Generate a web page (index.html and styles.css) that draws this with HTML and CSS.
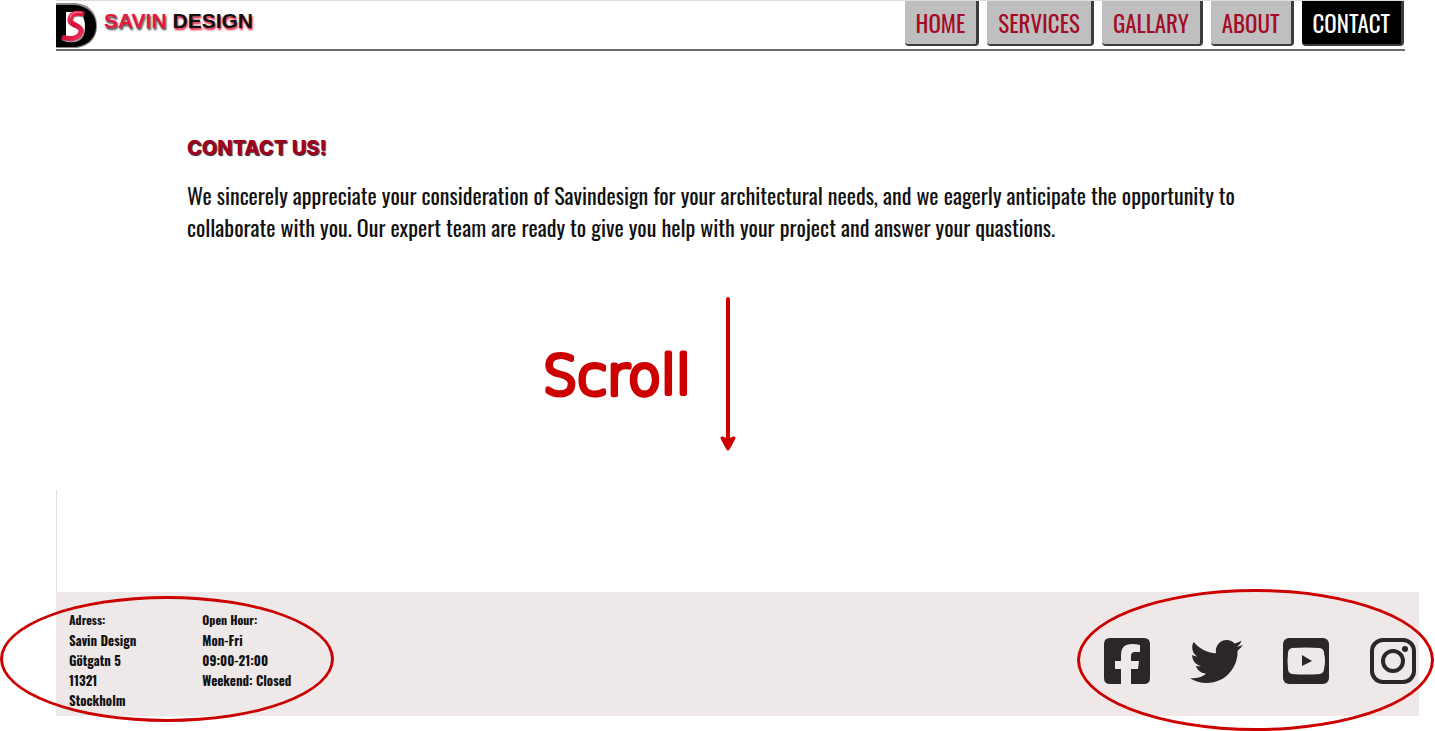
FILE: index.html
```html
<!DOCTYPE html>
<html lang="en">
<head>
<meta charset="utf-8">
<title>Savin Design - Contact</title>
<link rel="stylesheet" href="styles.css">
</head>
<body>
<div class="page">
  <header class="header">
    <a class="brand" href="#">
      <svg class="logo" viewBox="0 0 42 48" aria-hidden="true">
        <defs>
          <linearGradient id="shine" x1="0" y1="0" x2="1" y2="1">
            <stop offset="0" stop-color="#ff4a6c"/>
            <stop offset="0.5" stop-color="#d80b38"/>
            <stop offset="1" stop-color="#f53a60"/>
          </linearGradient>
        </defs>
        <path d="M0 2H17C32 2 41 11 41 25C41 39 31 47 17 47H0Z" fill="#888"/>
        <path d="M0 4H16C30 4 40 12 40 25C40 38 30 46 16 46H0Z" fill="#000"/>
        <path d="M10 11H20C26 12 29 18 29 25C29 33 26 39 19 41H10Z" fill="#fff"/>
        <path d="M28 14C19 12 16 14 15 19C14 26 26 24 26 31C25 40 13 40 7 37" fill="none" stroke="#999" stroke-width="5"/>
        <path d="M28 13C19 11 15 13 14 18C13 25 25 23 25 30C24 38 13 39 6 36" fill="none" stroke="url(#shine)" stroke-width="5"/>
        <path d="M26 12C19 10 15 12 14 17" fill="none" stroke="#ff8ba0" stroke-width="1"/>
      </svg>
      <span class="brand-name"><span class="brand-red">SAVIN</span> <span class="brand-dark">DESIGN</span></span>
    </a>
    <nav class="nav">
      <a class="tab" href="#">HOME</a>
      <a class="tab" href="#">SERVICES</a>
      <a class="tab" href="#">GALLARY</a>
      <a class="tab" href="#">ABOUT</a>
      <a class="tab active" href="#">CONTACT</a>
    </nav>
  </header>

  <main class="main">
    <section class="intro">
      <h1 class="title">CONTACT US!</h1>
      <p class="lead">We sincerely appreciate your consideration of Savindesign for your architectural needs, and we eagerly anticipate the opportunity to<br>collaborate with you. Our expert team are ready to give you help with your project and answer your quastions.</p>
    </section>
    <div class="scroll">
      <svg class="scroll-label" viewBox="0 0 150 64"><text x="0" y="52">Scroll</text></svg>
      <svg class="arrow" viewBox="0 0 18 156" aria-hidden="true">
        <path d="M9 3V144" stroke="#c00" stroke-width="4" stroke-linecap="round"/>
        <path d="M3 142L9 144L15 142Q12 148 9 153Q6 148 3 142Z" fill="#c00" stroke="#c00" stroke-width="3" stroke-linejoin="round"/>
      </svg>
    </div>
    <div class="spacer"></div>
  </main>

  <footer class="footer">
    <div class="details">
      <address class="block"><span class="small">Adress:</span><br>Savin Design<br>Götgatn 5<br>11321<br>Stockholm</address>
      <p class="block"><span class="small">Open Hour:</span><br>Mon-Fri<br>09:00-21:00<br>Weekend: Closed</p>
      <span class="ring ring-left"></span>
    </div>
    <div class="social">
      <a class="icon" href="#" aria-label="Facebook"><svg viewBox="0 0 48 48"><path fill="#2b2627" d="M7 1H41Q47 1 47 7V41Q47 47 41 47H28V32H35L36 24H28V19Q28 15 32 15H37V8Q33 7 29 7Q18 7 18 18V24H12V32H18V47H7Q1 47 1 41V7Q1 1 7 1Z"/></svg></a>
      <a class="icon wide" href="#" aria-label="Twitter"><svg viewBox="0 0 512 512"><path fill="#2b2627" d="M459.37 151.716c.325 4.548.325 9.097.325 13.645 0 138.72-105.583 298.558-298.558 298.558-59.452 0-114.68-17.219-161.137-47.106 8.447.974 16.568 1.299 25.34 1.299 49.055 0 94.213-16.568 130.274-44.832-46.132-.975-84.792-31.188-98.112-72.772 6.498.974 12.995 1.624 19.818 1.624 9.421 0 18.843-1.3 27.614-3.573-48.081-9.747-84.143-51.98-84.143-102.985v-1.299c13.969 7.797 30.214 12.67 47.431 13.319-28.264-18.843-46.781-51.005-46.781-87.391 0-19.492 5.197-37.36 14.294-52.954 51.655 63.675 129.3 105.258 216.365 109.807-1.624-7.797-2.599-15.918-2.599-24.04 0-57.828 46.782-104.934 104.934-104.934 30.213 0 57.502 12.67 76.67 33.137 23.715-4.548 46.456-13.32 66.599-25.34-7.798 24.366-24.366 44.833-46.132 57.827 21.117-2.273 41.584-8.122 60.426-16.243-14.292 20.791-32.161 39.308-52.628 54.253z"/></svg></a>
      <a class="icon" href="#" aria-label="YouTube"><svg viewBox="0 0 48 48"><rect x="1" y="1" width="46" height="46" rx="6" fill="#2b2627"/><path d="M10 11Q24 10 38 11Q42 12 42 16Q44 24 42 32Q42 36 38 37Q24 38 10 37Q6 36 6 32Q5 24 6 16Q6 12 10 11Z" fill="#eee8e8"/><path d="M20 18L30 24L20 29Z" fill="#2b2627"/></svg></a>
      <a class="icon" href="#" aria-label="Instagram"><svg viewBox="0 0 48 48"><rect x="3" y="3" width="42" height="42" rx="11" fill="none" stroke="#2b2627" stroke-width="4"/><circle cx="24" cy="24" r="10" fill="none" stroke="#2b2627" stroke-width="4"/><circle cx="36" cy="12" r="3" fill="#2b2627"/></svg></a>
      <span class="ring ring-right"></span>
    </div>
  </footer>
</div>
</body>
</html>
```
FILE: styles.css
```css
* { box-sizing: border-box; }
body {
  margin: 0;
  background: #fff;
  color: #111;
  font-family: Oswald, "Roboto Condensed", "Liberation Sans Narrow", "Liberation Sans", sans-serif;
}
a { color: inherit; text-decoration: none; }
.page { padding: 0 16px 15px 56px; }
.header {
  display: flex;
  justify-content: space-between;
  align-items: flex-start;
  height: 51px;
  margin-right: 14px;
  border-top: 1px solid #ddd;
  border-bottom: 2px solid #6b6b6b;
}
.brand { display: flex; gap: 6px; }
.logo { width: 42px; height: 48px; }
.brand-name {
  padding-top: 8px;
  font: bold 21px/24px "Liberation Sans", sans-serif;
}
.brand-red { color: #e8173d; text-shadow: 1px 2px 2px #444; }
.brand-dark { color: #111; text-shadow: 1px 2px 2px #e8173d; }
.nav { display: flex; gap: 8px; padding-right: 1px; }
.tab {
  padding: 1px 11px 0;
  border: solid #3c3c3c;
  border-width: 0 3px 2px 0;
  border-radius: 0 0 4px 4px;
  background: #bfbfbf;
  color: #a30b27;
  font-size: 23px;
  line-height: 42px;
}
.tab.active { background: #000; color: #fff; }
.intro { padding: 85px 120px 0 131px; }
.title {
  margin: 0;
  color: #a00320;
  font: 800 20px/24px Inter, sans-serif;
  text-shadow: 1px 1px 1px #223;
}
.lead {
  margin: 19px 0 0;
  font-size: 22px;
  line-height: 32px;
}
.scroll {
  display: flex;
  justify-content: center;
  align-items: center;
  gap: 26px;
  padding-top: 53px;
  padding-right: 196px;
}
.scroll-label {
  width: 150px;
  height: 64px;
  overflow: visible;
  fill: #c00;
  stroke: #c00;
  stroke-width: 5px;
  stroke-linejoin: round;
  font: 200 54px "DejaVu Sans", sans-serif;
}
.arrow { width: 18px; height: 156px; }
.spacer {
  height: 102px;
  margin-top: 38px;
  border-left: 1px solid #ddd;
}
.footer {
  display: flex;
  justify-content: space-between;
  align-items: center;
  height: 124px;
  padding: 0 2px 0 13px;
  background: #eee8e8;
}
.details {
  position: relative;
  display: flex;
  gap: 66px;
  padding-top: 11px;
}
.block {
  margin: 0;
  font-size: 13px;
  line-height: 20px;
  font-style: normal;
  font-weight: bold;
}
.small { font-size: 12px; }
.social { position: relative; display: flex; align-items: center; gap: 39px; padding-top: 14px; }
.icon { display: block; width: 48px; height: 48px; }
.icon.wide { width: 53px; height: 53px; }
.icon svg { display: block; width: 100%; height: 100%; }
.ring {
  position: absolute;
  border: 3px solid #c00;
  border-radius: 50%;
  pointer-events: none;
}
.ring-left { left: -69px; top: -2px; width: 334px; height: 126px; }
.ring-right { right: -17px; top: -32px; width: 357px; height: 142px; }
```
